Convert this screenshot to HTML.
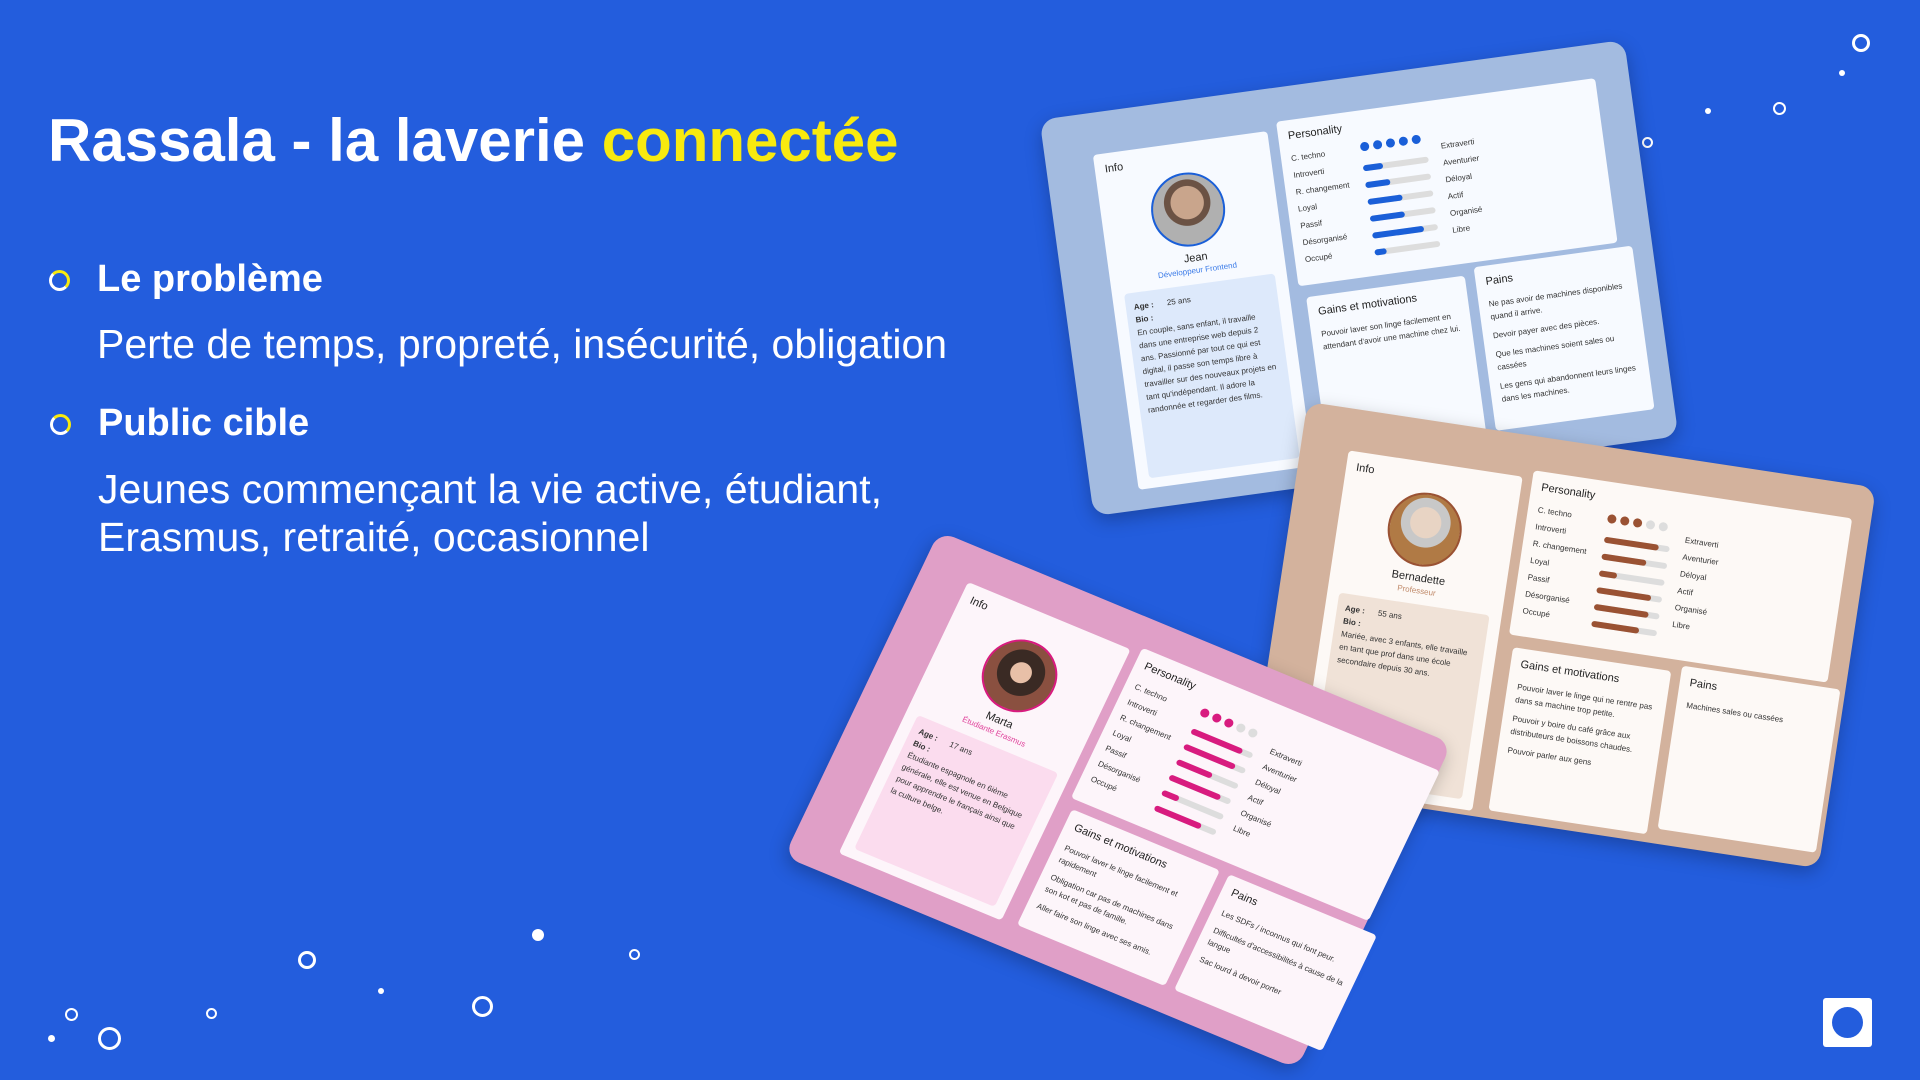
<!DOCTYPE html>
<html><head><meta charset="utf-8">
<style>
*{margin:0;padding:0;box-sizing:border-box}
body{width:1920px;height:1080px;overflow:hidden;background:#235ddd;font-family:"Liberation Sans",sans-serif;position:relative}
.t{position:absolute;color:#fff;white-space:nowrap}
.ring{position:absolute;border-radius:50%;border:3px solid #fff}
.dot{position:absolute;border-radius:50%;background:#fff}
.card{position:absolute;width:590px;height:400px;border-radius:16px;box-shadow:0 6px 18px rgba(0,0,0,.25);font-size:9px;color:#333}
.p{position:absolute;border-radius:4px}
.info{left:48px;top:42px;width:176px;height:338px}
.pers{left:234px;top:34px;width:322px;height:166px}
.gains{left:240px;top:212px;width:160px;height:165px}
.pains{left:410px;top:205px;width:160px;height:165px}
.h{position:absolute;left:10px;top:10px;font-size:11px;color:#222}
.av{position:absolute;left:50px;top:30px;width:74px;height:74px;border-radius:50%;border:2px solid}
.nm{position:absolute;top:110px;width:100%;text-align:center;font-size:11px;color:#222}
.rl{position:absolute;top:124px;width:100%;text-align:center;font-size:8px}
.bio{position:absolute;left:12px;top:142px;width:152px;height:186px;border-radius:4px;padding:8px;font-size:8px;line-height:13px}
.lab{position:absolute;left:10px;top:30px;font-size:8px;line-height:17px}
.rlab{position:absolute;left:160px;top:38px;font-size:8px;line-height:17px}
.dots{position:absolute;left:80px;top:32px}
.dots i{display:inline-block;width:9px;height:9px;border-radius:50%;margin-right:4px}
.bars{position:absolute;left:80px;top:55px}
.bar{width:66px;height:6px;border-radius:3px;background:#ddd;margin-bottom:11px;position:relative}
.bar b{position:absolute;left:0;top:0;height:6px;border-radius:3px}
.txt{position:absolute;left:10px;top:32px;width:140px;font-size:8px;line-height:13px}
.txt p{margin-bottom:6px}
</style></head><body>

<div class="t" style="left:48px;top:106px;font-size:60px;font-weight:bold">Rassala - la laverie <span style="color:#f8ea0e">connectée</span></div>

<div class="ring" style="left:49px;top:270px;width:21px;height:21px;border-color:#fff;border-top-color:#f8ea0e;border-right-color:#f8ea0e"></div>
<div class="t" style="left:97px;top:258px;font-size:38px;font-weight:bold">Le problème</div>
<div class="t" style="left:97px;top:321px;font-size:41px">Perte de temps, propreté, insécurité, obligation</div>
<div class="ring" style="left:50px;top:414px;width:21px;height:21px;border-top-color:#f8ea0e;border-right-color:#f8ea0e"></div>
<div class="t" style="left:98px;top:402px;font-size:38px;font-weight:bold">Public cible</div>
<div class="t" style="left:98px;top:465px;font-size:41px;line-height:48px">Jeunes commençant la vie active, étudiant,<br>Erasmus, retraité, occasionnel</div>

<div class="ring" style="left:1852px;top:34px;width:18px;height:18px"></div>
<div class="dot" style="left:1839px;top:70px;width:6px;height:6px"></div>
<div class="dot" style="left:1705px;top:108px;width:6px;height:6px"></div>
<div class="ring" style="left:1773px;top:102px;width:13px;height:13px;border-width:2px"></div>
<div class="ring" style="left:1642px;top:137px;width:11px;height:11px;border-width:2px"></div>
<div class="ring" style="left:298px;top:951px;width:18px;height:18px"></div>
<div class="dot" style="left:378px;top:988px;width:6px;height:6px"></div>
<div class="dot" style="left:532px;top:929px;width:12px;height:12px"></div>
<div class="ring" style="left:629px;top:949px;width:11px;height:11px;border-width:2px"></div>
<div class="ring" style="left:472px;top:996px;width:21px;height:21px"></div>
<div class="ring" style="left:65px;top:1008px;width:13px;height:13px;border-width:2px"></div>
<div class="ring" style="left:206px;top:1008px;width:11px;height:11px;border-width:2px"></div>
<div class="dot" style="left:48px;top:1035px;width:7px;height:7px"></div>
<div class="ring" style="left:98px;top:1027px;width:23px;height:23px"></div>
<div style="position:absolute;left:1823px;top:998px;width:49px;height:49px;background:#fff;border-radius:3px"><div style="position:absolute;left:9px;top:9px;width:31px;height:31px;border-radius:50%;background:#235ddd"></div></div>

<div class="card" style="left:1359px;top:278px;background:#a3bbe0;transform:translate(-50%,-50%) rotate(-7.8deg)">
 <div class="p info" style="background:#f7faff"><div class="h">Info</div>
  <div class="av" style="border-color:#1a5fd8;background:radial-gradient(circle at 50% 40%,#c9a58c 0 30%,#6b5244 31% 42%,#b0b0b0 43%)"></div>
  <div class="nm">Jean</div><div class="rl" style="color:#3b7be8">Développeur Frontend</div>
  <div class="bio" style="background:#dde9fb"><b>Age :</b> &nbsp;&nbsp;&nbsp;&nbsp; 25 ans<br><b>Bio :</b><br>En couple, sans enfant, il travaille dans une entreprise web depuis 2 ans. Passionné par tout ce qui est digital, il passe son temps libre à travailler sur des nouveaux projets en tant qu'indépendant. Il adore la randonnée et regarder des films.</div></div>
 <div class="p pers" style="background:#f7faff"><div class="h">Personality</div>
  <div class="lab">C. techno<br>Introverti<br>R. changement<br>Loyal<br>Passif<br>Désorganisé<br>Occupé</div>
  <div class="dots"><i style="background:#1a5fd8"></i><i style="background:#1a5fd8"></i><i style="background:#1a5fd8"></i><i style="background:#1a5fd8"></i><i style="background:#1a5fd8"></i></div>
  <div class="bars"><div class="bar"><b style="width:20px;background:#1a5fd8"></b></div><div class="bar"><b style="width:25px;background:#1a5fd8"></b></div><div class="bar"><b style="width:35px;background:#1a5fd8"></b></div><div class="bar"><b style="width:35px;background:#1a5fd8"></b></div><div class="bar"><b style="width:52px;background:#1a5fd8"></b></div><div class="bar"><b style="width:12px;background:#1a5fd8"></b></div></div>
  <div class="rlab">Extraverti<br>Aventurier<br>Déloyal<br>Actif<br>Organisé<br>Libre</div></div>
 <div class="p gains" style="background:#f7faff"><div class="h">Gains et motivations</div><div class="txt"><p>Pouvoir laver son linge facilement en attendant d'avoir une machine chez lui.</p></div></div>
 <div class="p pains" style="background:#f7faff"><div class="h">Pains</div><div class="txt"><p>Ne pas avoir de machines disponibles quand il arrive.</p><p>Devoir payer avec des pièces.</p><p>Que les machines soient sales ou cassées</p><p>Les gens qui abandonnent leurs linges dans les machines.</p></div></div>
</div>

<div class="card" style="left:1563px;top:635px;width:575px;height:385px;background:#d3b29d;transform:translate(-50%,-50%) rotate(8.6deg)">
 <div class="p info" style="background:#fdf9f6"><div class="h">Info</div>
  <div class="av" style="border-color:#9a5233;background:radial-gradient(circle at 50% 40%,#e8d4c4 0 28%,#c8c8c8 29% 45%,#b07a45 46%)"></div>
  <div class="nm">Bernadette</div><div class="rl" style="color:#c08a6a">Professeur</div>
  <div class="bio" style="background:#f0e2d7"><b>Age :</b> &nbsp;&nbsp;&nbsp;&nbsp; 55 ans<br><b>Bio :</b><br>Mariée, avec 3 enfants, elle travaille en tant que prof dans une école secondaire depuis 30 ans.</div></div>
 <div class="p pers" style="background:#fdf9f6"><div class="h">Personality</div>
  <div class="lab">C. techno<br>Introverti<br>R. changement<br>Loyal<br>Passif<br>Désorganisé<br>Occupé</div>
  <div class="dots"><i style="background:#9a5233"></i><i style="background:#9a5233"></i><i style="background:#9a5233"></i><i style="background:#ddd"></i><i style="background:#ddd"></i></div>
  <div class="bars"><div class="bar"><b style="width:55px;background:#9a5233"></b></div><div class="bar"><b style="width:45px;background:#9a5233"></b></div><div class="bar"><b style="width:18px;background:#9a5233"></b></div><div class="bar"><b style="width:55px;background:#9a5233"></b></div><div class="bar"><b style="width:55px;background:#9a5233"></b></div><div class="bar"><b style="width:48px;background:#9a5233"></b></div></div>
  <div class="rlab">Extraverti<br>Aventurier<br>Déloyal<br>Actif<br>Organisé<br>Libre</div></div>
 <div class="p gains" style="background:#fdf9f6"><div class="h">Gains et motivations</div><div class="txt"><p>Pouvoir laver le linge qui ne rentre pas dans sa machine trop petite.</p><p>Pouvoir y boire du café grâce aux distributeurs de boissons chaudes.</p><p>Pouvoir parler aux gens</p></div></div>
 <div class="p pains" style="background:#fdf9f6"><div class="h">Pains</div><div class="txt"><p>Machines sales ou cassées</p></div></div>
</div>

<div class="card" style="left:1118px;top:800px;width:555px;height:360px;background:#e09fc7;transform:translate(-50%,-50%) rotate(22.5deg) skewX(-3deg)">
 <div class="p info" style="background:#fdf5fa;top:36px;height:300px"><div class="h">Info</div>
  <div class="av" style="border-color:#d81b7f;background:radial-gradient(circle at 50% 45%,#e8c0a8 0 20%,#3a2a24 21% 45%,#8a5040 46%)"></div>
  <div class="nm">Marta</div><div class="rl" style="color:#e0409a">Étudiante Erasmus</div>
  <div class="bio" style="background:#fbdcee;height:148px"><b>Age :</b> &nbsp;&nbsp;&nbsp;&nbsp; 17 ans<br><b>Bio :</b><br>Étudiante espagnole en 6ième générale, elle est venue en Belgique pour apprendre le français ainsi que la culture belge.</div></div>
 <div class="p pers" style="background:#fdf5fa;top:30px"><div class="h">Personality</div>
  <div class="lab">C. techno<br>Introverti<br>R. changement<br>Loyal<br>Passif<br>Désorganisé<br>Occupé</div>
  <div class="dots"><i style="background:#d81b7f"></i><i style="background:#d81b7f"></i><i style="background:#d81b7f"></i><i style="background:#ddd"></i><i style="background:#ddd"></i></div>
  <div class="bars"><div class="bar"><b style="width:55px;background:#d81b7f"></b></div><div class="bar"><b style="width:55px;background:#d81b7f"></b></div><div class="bar"><b style="width:38px;background:#d81b7f"></b></div><div class="bar"><b style="width:55px;background:#d81b7f"></b></div><div class="bar"><b style="width:18px;background:#d81b7f"></b></div><div class="bar"><b style="width:50px;background:#d81b7f"></b></div></div>
  <div class="rlab">Extraverti<br>Aventurier<br>Déloyal<br>Actif<br>Organisé<br>Libre</div></div>
 <div class="p gains" style="background:#fdf5fa;top:206px;height:128px"><div class="h">Gains et motivations</div><div class="txt"><p>Pouvoir laver le linge facilement et rapidement</p><p>Obligation car pas de machines dans son kot et pas de famille.</p><p>Aller faire son linge avec ses amis.</p></div></div>
 <div class="p pains" style="background:#fdf5fa;top:206px;height:128px"><div class="h">Pains</div><div class="txt"><p>Les SDFs / inconnus qui font peur.</p><p>Difficultés d'accessibilités à cause de la langue</p><p>Sac lourd à devoir porter</p></div></div>
</div>

</body></html>
